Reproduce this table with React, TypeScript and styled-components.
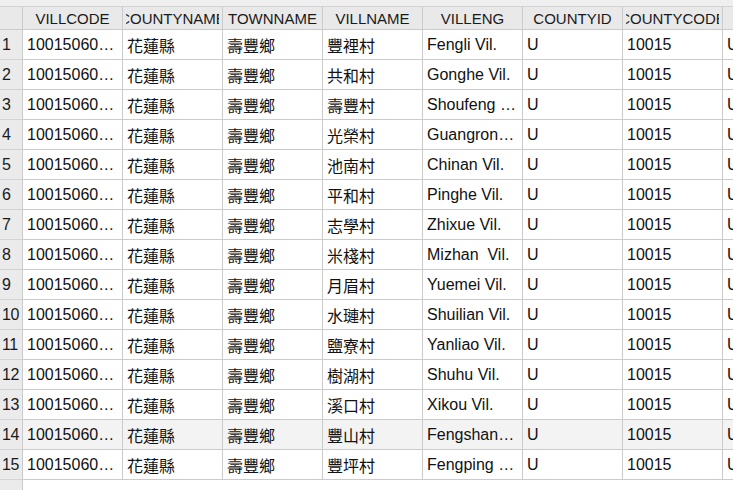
import React from "react";
import styled, { createGlobalStyle } from "styled-components";

const Global = createGlobalStyle`
  html, body { margin: 0; padding: 0; background: #ffffff; }
  body { font-family: "Liberation Sans", Arial, "Noto Sans CJK TC", sans-serif; }
`;

const Frame = styled.div`
  width: 733px;
  height: 490px;
  overflow: hidden;
  background: #ffffff;
  display: flex;
  flex-direction: column;
`;

const TopStrip = styled.div`
  height: 6px;
  flex: none;
  background: #efefef;
  border-bottom: 1px solid #d2d2d2;
`;

const Grid = styled.div`
  display: grid;
  grid-template-columns: 23px repeat(8, 100px);
  grid-auto-rows: 30px;
  grid-template-rows: 23px;
  width: max-content;
  flex: none;
`;

const HeaderCell = styled.div`
  background: #e9e9e9;
  border-right: 1px solid #cbcbcb;
  border-bottom: 1px solid #cbcbcb;
  box-sizing: border-box;
  padding: 0 3px;
  display: flex;
  min-width: 0;
`;

const HeaderClip = styled.div`
  flex: 1;
  min-width: 0;
  display: flex;
  justify-content: center;
  align-items: center;
  overflow: hidden;
  font-size: 15px;
  color: #1a1a1a;
  white-space: nowrap;
`;

const HeaderLabel = styled.span`
  flex: none;
`;

const RowNum = styled.div`
  background: #ebebeb;
  border-right: 1px solid #cbcbcb;
  border-bottom: 1px solid #d4d4d4;
  box-sizing: border-box;
  font-size: 16px;
  color: #1a1a1a;
  display: flex;
  align-items: center;
  padding-left: 2px;
  letter-spacing: -0.5px;
  white-space: nowrap;
  overflow: hidden;
`;

const Cell = styled.div<{ $hl?: boolean; $cjk?: boolean }>`
  background: ${(p) => (p.$hl ? "#f3f3f3" : "#ffffff")};
  border-right: 1px solid #cbcbcb;
  border-bottom: 1px solid #cbcbcb;
  box-sizing: border-box;
  padding: 0 4px 0 4px;
  display: flex;
  align-items: center;
  font-size: 16px;
  font-family: ${(p) =>
    p.$cjk
      ? `"Noto Sans CJK TC", "Noto Sans CJK SC", sans-serif`
      : `"Liberation Sans", Arial, sans-serif`};
  color: #111111;
  overflow: hidden;
  min-width: 0;
`;

const CellText = styled.span`
  display: block;
  white-space: pre;
  overflow: hidden;
  text-overflow: ellipsis;
  min-width: 0;
`;

const Filler = styled.div`
  display: grid;
  grid-template-columns: 23px 1fr;
  flex: 1;
`;

const FillerNum = styled.div`
  background: #ebebeb;
  border-right: 1px solid #cbcbcb;
`;

const FillerBody = styled.div`
  background: #ffffff;
`;

const headers = [
  "VILLCODE",
  "COUNTYNAME",
  "TOWNNAME",
  "VILLNAME",
  "VILLENG",
  "COUNTYID",
  "COUNTYCODE",
  "TOWNID",
];

const villages: [string, string][] = [
  ["豐裡村", "Fengli Vil."],
  ["共和村", "Gonghe Vil."],
  ["壽豐村", "Shoufeng Vil."],
  ["光榮村", "Guangrong Vil."],
  ["池南村", "Chinan Vil."],
  ["平和村", "Pinghe Vil."],
  ["志學村", "Zhixue Vil."],
  ["米棧村", "Mizhan  Vil."],
  ["月眉村", "Yuemei Vil."],
  ["水璉村", "Shuilian Vil."],
  ["鹽寮村", "Yanliao Vil."],
  ["樹湖村", "Shuhu Vil."],
  ["溪口村", "Xikou Vil."],
  ["豐山村", "Fengshan Vil."],
  ["豐坪村", "Fengping Vil."],
];

export default function App() {
  return (
    <>
      <Global />
      <Frame>
        <TopStrip />
        <Grid>
          <HeaderCell />
          {headers.map((h) => (
            <HeaderCell key={h}>
              <HeaderClip>
                <HeaderLabel>{h}</HeaderLabel>
              </HeaderClip>
            </HeaderCell>
          ))}
          {villages.map(([name, eng], i) => {
            const hl = i === 13;
            const code = "10015060" + String(i + 1).padStart(3, "0");
            return (
              <React.Fragment key={code}>
                <RowNum>{i + 1}</RowNum>
                <Cell $hl={hl}>
                  <CellText>{code}</CellText>
                </Cell>
                <Cell $hl={hl} $cjk>
                  <CellText>花蓮縣</CellText>
                </Cell>
                <Cell $hl={hl} $cjk>
                  <CellText>壽豐鄉</CellText>
                </Cell>
                <Cell $hl={hl} $cjk>
                  <CellText>{name}</CellText>
                </Cell>
                <Cell $hl={hl}>
                  <CellText>{eng}</CellText>
                </Cell>
                <Cell $hl={hl}>
                  <CellText>U</CellText>
                </Cell>
                <Cell $hl={hl}>
                  <CellText>10015</CellText>
                </Cell>
                <Cell $hl={hl}>
                  <CellText>U06</CellText>
                </Cell>
              </React.Fragment>
            );
          })}
        </Grid>
        <Filler>
          <FillerNum />
          <FillerBody />
        </Filler>
      </Frame>
    </>
  );
}
